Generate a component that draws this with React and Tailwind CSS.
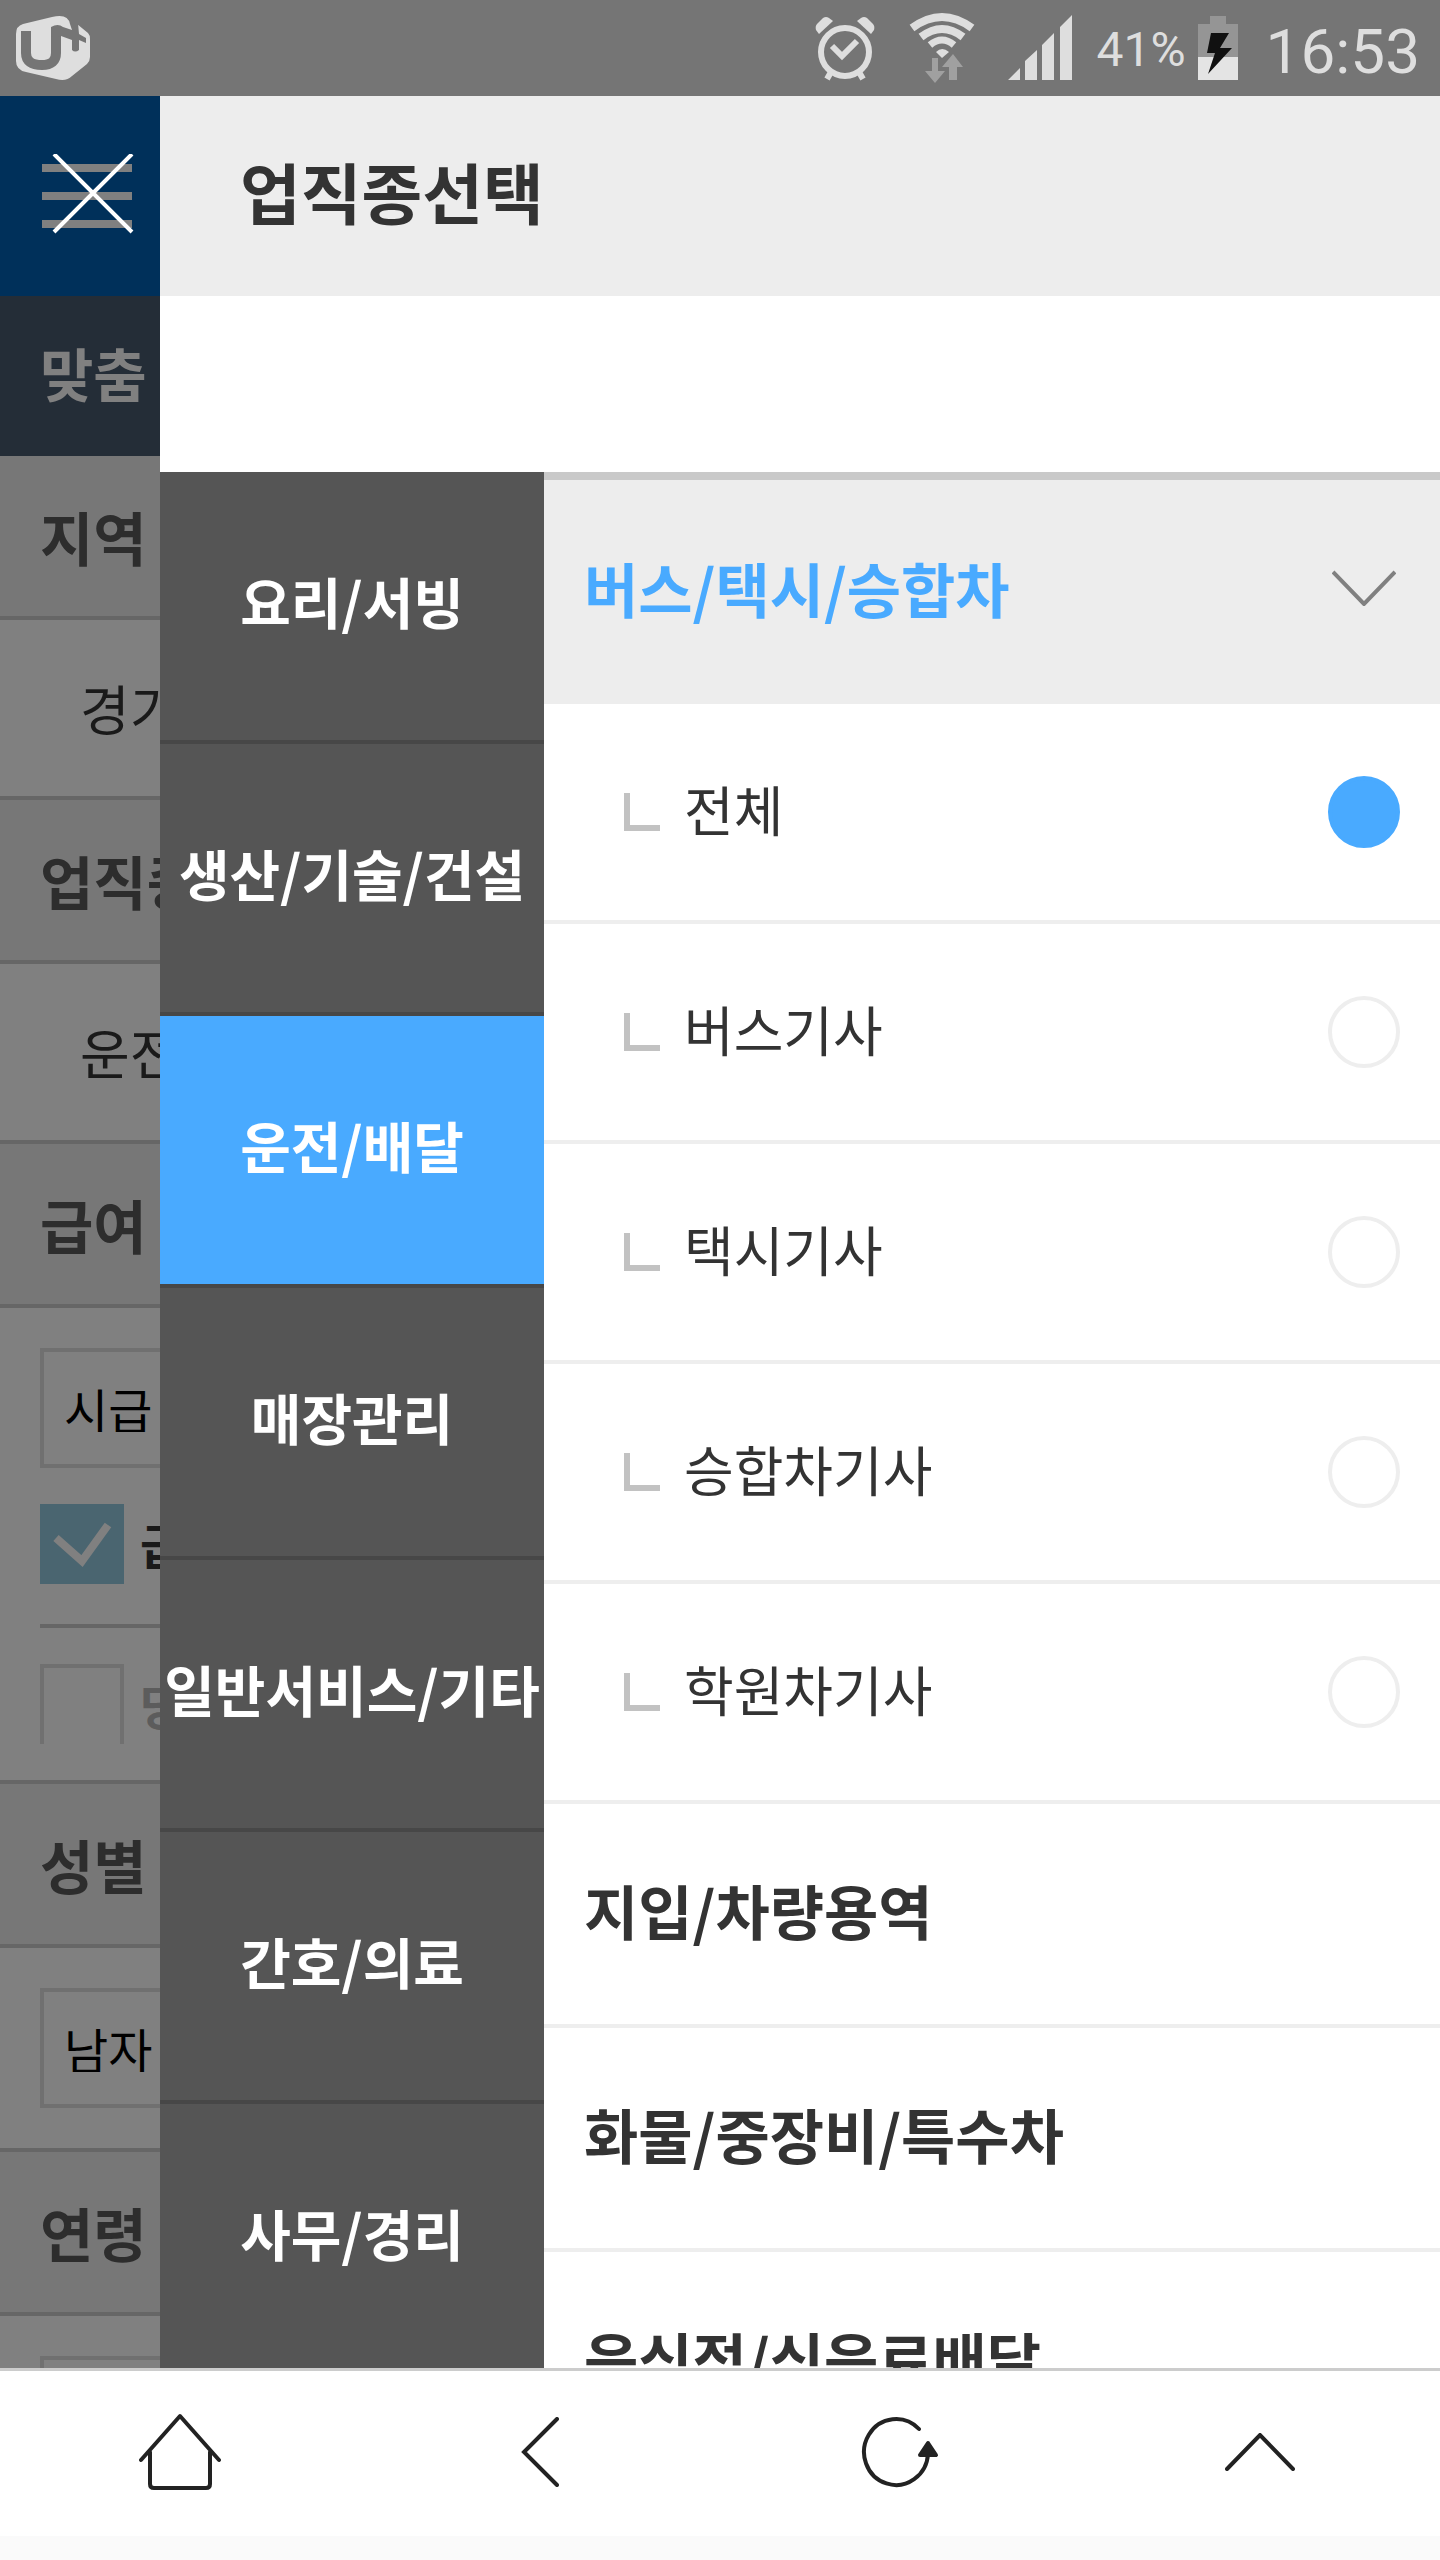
const KR = "font-['Noto_Sans_CJK_KR','Noto_Sans',sans-serif]";

const categories = [
  '요리/서빙',
  '생산/기술/건설',
  '운전/배달',
  '매장관리',
  '일반서비스/기타',
  '간호/의료',
  '사무/경리',
];

const jobs = ['전체', '버스기사', '택시기사', '승합차기사', '학원차기사'];

const groups = ['지입/차량용역', '화물/중장비/특수차', '음식점/식음료배달'];

function StatusBar() {
  return (
    <header className="flex h-24 shrink-0 items-center justify-between bg-[#757575] pl-4 pr-5 text-[#dedede]">
      <svg viewBox="0 0 76 66" className="h-[66px] w-[76px]" fill="#dedede" aria-label="U+">
        <path d="M7 9 36 2Q52 -2 54 9L56 15 61 9 72 18Q74 20 74 24V42Q74 46 71 49L56 61Q50 67 40 64L10 57Q0 55 0 46V19Q0 11 7 9Z" />
        <path
          d="M10 16V38Q10 50 26 50Q40 50 40 38V15"
          fill="none"
          stroke="#757575"
          strokeWidth="10"
        />
        <path
          d="M35 12Q42 8 47 12L56 15V8H62L63 19 70 23V28L63 25V35Q59 38 56 35V25L45 21 35 22Z"
          fill="#757575"
        />
      </svg>
      <div className="flex items-center">
        <svg viewBox="0 0 62 66" className="h-[66px] w-[62px]" fill="none" stroke="#dedede" aria-label="알람">
          <circle cx="31" cy="37" r="24" strokeWidth="6" />
          <path d="M18 31 28 41 43 26" strokeWidth="6" />
          <path d="M5 19 2 15Q1 11 3 9L9 3Q12 1 15 3L19 6Z" fill="#dedede" stroke="none" />
          <path d="M57 19 60 15Q61 11 59 9L53 3Q50 1 47 3L43 6Z" fill="#dedede" stroke="none" />
          <path d="M17 57 13 64M45 57 49 64" strokeWidth="6" />
        </svg>
        <svg viewBox="0 0 68 72" className="ml-8 h-[72px] w-[68px]" fill="none" stroke="#dedede" aria-label="Wi-Fi">
          <path d="M4 16Q34 -6 64 16" strokeWidth="8" />
          <path d="M13 25Q34 9 55 25" strokeWidth="8" />
          <path d="M22 33Q34 23 46 33" strokeWidth="7" />
          <path d="M28 40Q34 34 41 40L34 46Z" fill="#dedede" stroke="none" />
          <path d="M24 46H30V59H37L27 71 17 59H24Z" fill="#a0a0a0" stroke="none" />
          <path d="M41 68V55H34L45 42 55 55H49V68Z" fill="#a0a0a0" stroke="none" />
        </svg>
        <svg viewBox="0 0 64 66" className="ml-8 h-[66px] w-16" fill="#dedede" aria-label="신호">
          <path d="M0 65 12 53V65ZM17 65V46L29 35V65ZM34 65V30L46 18V65ZM52 65V12L64 0V65Z" />
        </svg>
        <span className="ml-6 pt-1 font-[Roboto,sans-serif] text-5xl leading-none">41%</span>
        <svg viewBox="0 0 40 64" className="ml-3 h-16 w-10" aria-label="충전 중">
          <path d="M12 0H28V8H40V41H0V8H12Z" fill="#959595" />
          <path d="M0 41H40V64H0Z" fill="#e4e4e4" />
          <path d="M13 17H31L22 32H34L10 58 17 37H9Z" fill="#111" />
        </svg>
        <span className="ml-7 pt-2 font-[Roboto,sans-serif] text-[62px] leading-none">16:53</span>
      </div>
    </header>
  );
}

function SideHeading({ children }) {
  return (
    <h2 className="h-41 shrink-0 overflow-hidden whitespace-nowrap border-b-4 border-[#666] bg-[#777] pl-10 text-[58px] font-bold leading-[160px] text-[#2d2d2d]">
      {children}
    </h2>
  );
}

function SideValue({ children }) {
  return (
    <p className="h-45 shrink-0 overflow-hidden whitespace-nowrap border-b-4 border-[#666] pl-20 text-[54px] leading-[176px] text-[#1a1a1a]">
      {children}
    </p>
  );
}

function SideSelect({ label, value }) {
  return (
    <select
      aria-label={label}
      className="block h-30 w-80 appearance-none border-4 border-[#707070] bg-transparent pl-5 text-5xl text-black"
    >
      <option>{value}</option>
    </select>
  );
}

function SidePage() {
  return (
    <aside className="flex w-40 shrink-0 flex-col overflow-hidden bg-[#808080]">
      <button aria-label="닫기" className="flex h-50 w-full shrink-0 items-center bg-[#00305a] pl-10">
        <svg viewBox="0 0 96 84" className="h-21 w-24" fill="none">
          <path d="M2 14H92M2 42H92M2 70H92" stroke="#808080" strokeWidth="8" />
          <path d="M14 0 92 78M92 0 14 78" stroke="#fff" strokeWidth="4" />
        </svg>
      </button>
      <h1 className="h-40 shrink-0 overflow-hidden whitespace-nowrap bg-[#242d37] pl-10 text-[58px] font-bold leading-[152px] text-[#808080]">
        맞춤
      </h1>
      <SideHeading>지역</SideHeading>
      <SideValue>경기</SideValue>
      <SideHeading>업직종</SideHeading>
      <SideValue>운전</SideValue>
      <SideHeading>급여</SideHeading>
      <div className="flex shrink-0 flex-col border-b-4 border-[#666] pb-9 pl-10 pt-10">
        <SideSelect label="급여" value="시급" />
        <label className="mt-9 flex h-20 items-center gap-4 whitespace-nowrap text-5xl font-bold text-[#1a1a1a]">
          <input type="checkbox" defaultChecked className="peer sr-only" />
          <span className="flex h-20 w-21 shrink-0 items-center justify-center bg-[#4a6570]">
            <svg viewBox="0 0 60 48" className="h-12 w-15" fill="none" stroke="#808080" strokeWidth="8">
              <path d="M4 18 30 41 56 5" />
            </svg>
          </span>
          급여
        </label>
        <div className="mt-10 h-1 w-80 bg-[#666]" />
        <label className="mt-9 flex h-20 items-center gap-4 whitespace-nowrap text-5xl font-bold text-[#5c5c5c]">
          <input
            type="checkbox"
            className="h-20 w-21 shrink-0 appearance-none border-4 border-b-0 border-[#707070]"
          />
          당일
        </label>
      </div>
      <SideHeading>성별</SideHeading>
      <div className="shrink-0 border-b-4 border-[#666] py-10 pl-10">
        <SideSelect label="성별" value="남자" />
      </div>
      <SideHeading>연령</SideHeading>
      <div className="shrink-0 py-10 pl-10">
        <SideSelect label="연령" value="" />
      </div>
    </aside>
  );
}

function CategoryList() {
  return (
    <nav className="flex w-96 shrink-0 flex-col overflow-hidden">
      {categories.map((name) => (
        <button
          key={name}
          className={
            'h-68 shrink-0 whitespace-nowrap border-b-4 border-[#474747] pb-3 text-[55px] font-bold text-white ' +
            (name === '운전/배달' ? 'bg-[#49aaff]' : 'bg-[#555]')
          }
        >
          {name}
        </button>
      ))}
    </nav>
  );
}

function JobList() {
  return (
    <section className="flex min-w-0 flex-1 flex-col overflow-hidden border-t-8 border-[#c9c9c9]">
      <button className="flex h-56 shrink-0 items-center justify-between bg-[#ededed] pb-2 pl-10 pr-11 text-[59px] font-bold text-[#49aaff]">
        버스/택시/승합차
        <svg viewBox="0 0 64 36" className="h-9 w-16" fill="none" stroke="#808080" strokeWidth="4">
          <path d="M1 2 32 34 63 2" />
        </svg>
      </button>
      {jobs.map((name, i) => (
        <label
          key={name}
          className="flex h-55 shrink-0 items-center border-b-4 border-[#eee] pl-20 pr-10 text-[54px] text-[#333]"
        >
          <svg viewBox="0 0 36 38" className="mr-6 h-[38px] w-9" fill="none" stroke="#c2c2c2" strokeWidth="6">
            <path d="M3 0V35H36" />
          </svg>
          <span className="flex-1 pb-2">{name}</span>
          <input
            type="radio"
            name="job"
            defaultChecked={i === 0}
            className="size-18 appearance-none rounded-full border-4 border-[#eee] checked:border-[#49aaff] checked:bg-[#49aaff]"
          />
        </label>
      ))}
      {groups.map((name) => (
        <button
          key={name}
          className="h-56 shrink-0 whitespace-nowrap border-b-4 border-[#eee] pb-2 pl-10 text-left text-[59px] font-bold text-[#333]"
        >
          {name}
        </button>
      ))}
    </section>
  );
}

function BottomBar() {
  return (
    <footer className="h-48 shrink-0 border-b-24 border-[#fafafa] bg-white">
      <nav className="grid h-full grid-cols-4 border-t-3 border-[#ccc] pb-1">
        <button aria-label="홈" className="flex items-center justify-center">
          <svg viewBox="0 0 82 78" className="h-[78px] w-[82px]" fill="none" stroke="#222" strokeWidth="4" strokeLinecap="round" strokeLinejoin="round">
            <path d="M2 47 41 3 80 47M11 39V71Q11 75 15 75H67Q71 75 71 71V39" />
          </svg>
        </button>
        <button aria-label="뒤로" className="flex items-center justify-center">
          <svg viewBox="0 0 38 70" className="h-[70px] w-[38px]" fill="none" stroke="#222" strokeWidth="4" strokeLinecap="round">
            <path d="M36 2 3 35 36 68" />
          </svg>
        </button>
        <button aria-label="새로고침" className="flex items-center justify-center">
          <svg viewBox="0 0 78 72" className="h-18 w-[78px]" fill="none" stroke="#222" strokeWidth="4" strokeLinecap="round">
            <path d="M58 13A32 33 0 1 0 67 38" />
            <path d="M67 27 75 39H59Z" fill="#222" strokeLinejoin="round" />
          </svg>
        </button>
        <button aria-label="위로" className="flex items-center justify-center">
          <svg viewBox="0 0 70 38" className="h-[38px] w-[70px]" fill="none" stroke="#222" strokeWidth="4" strokeLinecap="round">
            <path d="M2 36 35 2 68 36" />
          </svg>
        </button>
      </nav>
    </footer>
  );
}

export default function App() {
  return (
    <div className={'flex h-screen flex-col overflow-hidden bg-white ' + KR}>
      <StatusBar />
      <div className="flex min-h-0 flex-1">
        <SidePage />
        <main className="flex min-w-0 flex-1 flex-col">
          <h1 className="h-50 shrink-0 bg-[#ededed] pl-20 text-[66px] font-bold leading-[188px] text-[#333]">
            업직종선택
          </h1>
          <div className="h-44 shrink-0" />
          <div className="flex min-h-0 flex-1">
            <CategoryList />
            <JobList />
          </div>
        </main>
      </div>
      <BottomBar />
    </div>
  );
}
